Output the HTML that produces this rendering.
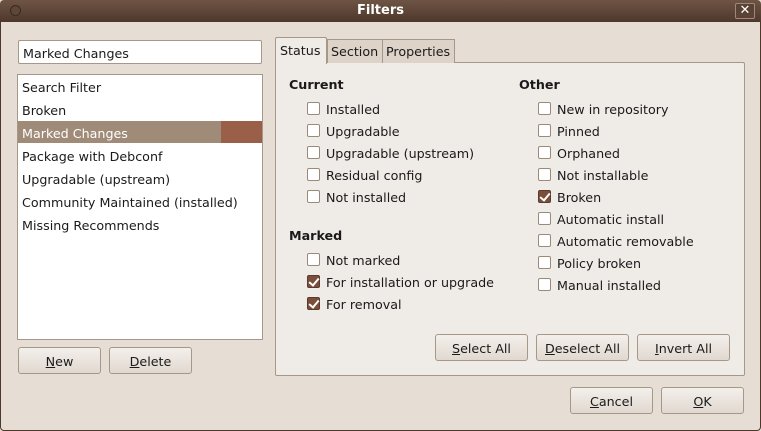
<!DOCTYPE html><html><head><style>
*{box-sizing:border-box;margin:0;padding:0}
body{width:761px;height:431px;overflow:hidden;background:#e6ded5;font-family:"DejaVu Sans","Liberation Sans",sans-serif;font-size:12.7px;color:#1a1a1a;position:relative}
.a{position:absolute}
.tb{left:0;top:0;width:761px;height:22px;background:linear-gradient(#6e5444,#4e382c);border-radius:4px 4px 0 0;color:#fff;font-weight:bold;text-align:center;line-height:22px;font-size:13px}
.frame{left:0;top:22px;width:761px;height:409px;border:1px solid #4e382c;border-top:none;border-radius:0 0 4px 4px}
.btn{position:absolute;height:27px;border:1px solid #a59888;border-radius:3px;background:linear-gradient(#f3efeb,#e1d9d0);text-align:center;line-height:27px}
.cb{position:absolute;width:13px;height:13px;border:1px solid #9a8a7a;border-radius:2px;background:#fff}
.cb.c{background:#7a4e3a;border-color:#5a3a2a}
.cb.c::after{content:"";position:absolute;left:3px;top:0px;width:4px;height:8px;border:solid #fff;border-width:0 2px 2px 0;transform:rotate(40deg)}
.l{position:absolute;line-height:16px;margin-top:2px}
.h{position:absolute;font-weight:bold;margin-top:2px}
u{text-decoration:underline}
</style></head><body>
<div class="a tb">Filters</div>
<div class="a" style="left:10px;top:5px;width:11px;height:11px;border:1px solid #3a2a20;border-radius:50%;background:#5e4638"></div>
<div class="a" style="left:735px;top:3px;width:20px;height:16px;border:1px solid #a08878;border-radius:2px;background:#5a4234;color:#fff;font-weight:bold;text-align:center;line-height:14px;font-size:13px">✕</div>
<div class="a frame"></div>
<div class="a" style="left:18px;top:40px;width:244px;height:24px;background:#fff;border:1px solid #a59888;border-radius:2px;padding-left:4px;line-height:25px">Marked Changes</div>
<div class="a" style="left:17px;top:74px;width:246px;height:266px;background:#fff;border:1px solid #a59888"></div>
<div class="a" style="left:18px;top:121px;width:203px;height:22px;background:#a08a78"></div>
<div class="a" style="left:221px;top:121px;width:41px;height:22px;background:#9a5f48"></div>
<div class="l" style="left:22px;top:78px">Search Filter</div>
<div class="l" style="left:22px;top:101px">Broken</div>
<div class="l" style="left:22px;top:124px;color:#fff">Marked Changes</div>
<div class="l" style="left:22px;top:147px">Package with Debconf</div>
<div class="l" style="left:22px;top:170px">Upgradable (upstream)</div>
<div class="l" style="left:22px;top:193px">Community Maintained (installed)</div>
<div class="l" style="left:22px;top:216px">Missing Recommends</div>
<div class="btn" style="left:18px;top:347px;width:83px"><u>N</u>ew</div>
<div class="btn" style="left:109px;top:347px;width:83px"><u>D</u>elete</div>
<div class="a" style="left:275px;top:62px;width:470px;height:314px;background:#efebe7;border:1px solid #a59888;border-radius:2px"></div>
<div class="a" style="left:327px;top:39px;width:56px;height:24px;background:#ddd3c8;border:1px solid #a59888;border-bottom:none;padding-left:3px;line-height:24px">Section</div>
<div class="a" style="left:382px;top:39px;width:73px;height:24px;background:#ddd3c8;border:1px solid #a59888;border-bottom:none;padding-left:3px;line-height:24px">Properties</div>
<div class="a" style="left:275px;top:37px;width:52px;height:27px;background:#efebe7;border:1px solid #a59888;border-bottom:none;border-radius:2px 2px 0 0;padding-left:4px;line-height:25px">Status</div>
<div class="h" style="left:289px;top:75px">Current</div>
<div class="h" style="left:289px;top:226px">Marked</div>
<div class="h" style="left:519px;top:75px">Other</div>
<div class="cb" style="left:307px;top:102px"></div><div class="l" style="left:326px;top:100px">Installed</div>
<div class="cb" style="left:307px;top:124px"></div><div class="l" style="left:326px;top:122px">Upgradable</div>
<div class="cb" style="left:307px;top:146px"></div><div class="l" style="left:326px;top:144px">Upgradable (upstream)</div>
<div class="cb" style="left:307px;top:168px"></div><div class="l" style="left:326px;top:166px">Residual config</div>
<div class="cb" style="left:307px;top:190px"></div><div class="l" style="left:326px;top:188px">Not installed</div>
<div class="cb" style="left:307px;top:253px"></div><div class="l" style="left:326px;top:251px">Not marked</div>
<div class="cb c" style="left:307px;top:275px"></div><div class="l" style="left:326px;top:273px">For installation or upgrade</div>
<div class="cb c" style="left:307px;top:297px"></div><div class="l" style="left:326px;top:295px">For removal</div>
<div class="cb" style="left:538px;top:102px"></div><div class="l" style="left:557px;top:100px">New in repository</div>
<div class="cb" style="left:538px;top:124px"></div><div class="l" style="left:557px;top:122px">Pinned</div>
<div class="cb" style="left:538px;top:146px"></div><div class="l" style="left:557px;top:144px">Orphaned</div>
<div class="cb" style="left:538px;top:168px"></div><div class="l" style="left:557px;top:166px">Not installable</div>
<div class="cb c" style="left:538px;top:190px"></div><div class="l" style="left:557px;top:188px">Broken</div>
<div class="cb" style="left:538px;top:212px"></div><div class="l" style="left:557px;top:210px">Automatic install</div>
<div class="cb" style="left:538px;top:234px"></div><div class="l" style="left:557px;top:232px">Automatic removable</div>
<div class="cb" style="left:538px;top:256px"></div><div class="l" style="left:557px;top:254px">Policy broken</div>
<div class="cb" style="left:538px;top:278px"></div><div class="l" style="left:557px;top:276px">Manual installed</div>
<div class="btn" style="left:435px;top:334px;width:93px"><u>S</u>elect All</div>
<div class="btn" style="left:536px;top:334px;width:93px"><u>D</u>eselect All</div>
<div class="btn" style="left:637px;top:334px;width:93px"><u>I</u>nvert All</div>
<div class="btn" style="left:570px;top:387px;width:83px"><u>C</u>ancel</div>
<div class="btn" style="left:661px;top:387px;width:83px"><u>O</u>K</div>
</body></html>
